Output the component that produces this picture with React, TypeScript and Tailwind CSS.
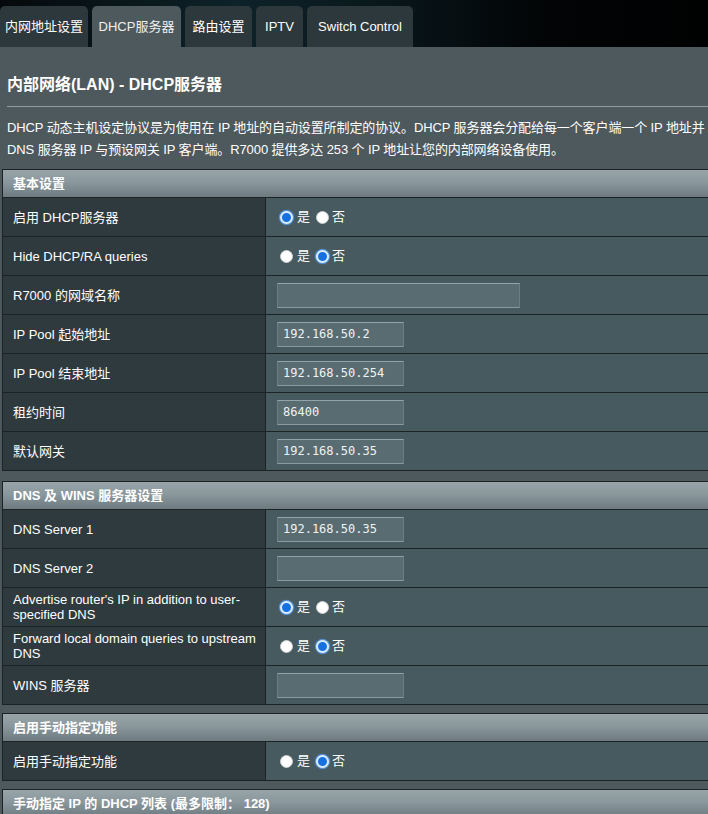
const tabs = [
  { label: "内网地址设置", w: "w-[88px]" },
  { label: "DHCP服务器", w: "w-[89px]", active: true },
  { label: "路由设置", w: "w-[67px]" },
  { label: "IPTV", w: "w-[47px]" },
  { label: "Switch Control", w: "w-[106px]" },
];

function Radio({ on }: { on: boolean }) {
  return on ? (
    <span className="inline-block h-[13px] w-[13px] rounded-full border-2 border-[#dcecff] bg-[#1670e0] shadow-[0_0_1px_1px_#5aa0f0]" />
  ) : (
    <span className="inline-block h-[13px] w-[13px] rounded-full border border-[#c9cdd0] bg-white" />
  );
}

function YesNo({ yes }: { yes: boolean }) {
  return (
    <div className="flex items-center text-[13px] text-white">
      <span className="ml-[3px] flex"><Radio on={yes} /></span>
      <span className="ml-[4px]">是</span>
      <span className="ml-[6px] flex"><Radio on={!yes} /></span>
      <span className="ml-[3px]">否</span>
    </div>
  );
}

function Field({ value = "", w = "w-[127px]" }: { value?: string; w?: string }) {
  return (
    <div
      className={`${w} flex h-[25px] items-center border border-[#6a7d83] border-t-[#93a4a9] border-b-[#8a9ba0] bg-[#596c71] pl-[5px] text-[12px] text-[#eef3f4]`}
      style={{ fontFamily: '"DejaVu Sans Mono", monospace' }}
    >
      {value}
    </div>
  );
}

type Row = { label: string; yes?: boolean; value?: string; w?: string };

function Section({ title, rows, className = "" }: { title: string; rows: Row[]; className?: string }) {
  return (
    <div className={`mx-[2px] border border-[#1c2325] ${className}`}>
      <div className="flex h-[28px] items-center border-b border-[#1c2325] bg-[linear-gradient(#97a4a8,#8a979c_45%,#6d7a7f)] pl-[10px] text-[13px] font-bold text-white">
        {title}
      </div>
      {rows.map((r, i) => (
        <div key={i} className="flex h-[39px] border-b border-[#1c2325] last:border-b-0 last:h-[38px]">
          <div className="flex w-[263px] shrink-0 items-center border-r border-[#1c2325] bg-[#2f3a3e] pl-[10px] pr-[4px] text-[13px] leading-[15px] text-white">
            {r.label}
          </div>
          <div className="flex flex-1 items-center bg-[#475a5f] pl-[11px]">
            {r.yes !== undefined ? <YesNo yes={r.yes} /> : <Field value={r.value} w={r.w} />}
          </div>
        </div>
      ))}
    </div>
  );
}

export default function App() {
  return (
    <div
      className="h-[814px] w-[708px] overflow-hidden bg-[#4d595d]"
      style={{ fontFamily: '"Liberation Sans", "Noto Sans CJK SC", sans-serif' }}
    >
      <div className="w-[780px]">
        <div className="flex h-[47px] items-end gap-[4px] bg-[linear-gradient(90deg,#05090b,#0d2329_30%,#0a1a1f_45%,#020405_70%,#000)]">
          {tabs.map((t) => (
            <div
              key={t.label}
              className={`${t.w} flex h-[41px] items-center justify-center rounded-t-[5px] text-[13px] ${
                t.active ? "bg-[#4d595d] text-[#f0f0f0]" : "bg-[#2d383c] text-white"
              }`}
            >
              {t.label}
            </div>
          ))}
        </div>

        <div className="px-[7px] pt-[27px] text-[16px] font-bold leading-[22px] text-white">
          内部网络(LAN) - DHCP服务器
        </div>
        <div className="ml-[7px] mt-[10px] h-px bg-[#8f9ca0]" />
        <div className="w-[708px] overflow-hidden whitespace-nowrap px-[7px] pt-[10px] text-[13px] leading-[22px] tracking-[-0.1px] text-white">
          <div>DHCP 动态主机设定协议是为使用在 IP 地址的自动设置所制定的协议。DHCP 服务器会分配给每一个客户端一个 IP 地址并</div>
          <div>DNS 服务器 IP 与预设网关 IP 客户端。R7000 提供多达 253 个 IP 地址让您的内部网络设备使用。</div>
        </div>

        <Section
          className="mt-[8px]"
          title="基本设置"
          rows={[
            { label: "启用 DHCP服务器", yes: true },
            { label: "Hide DHCP/RA queries", yes: false },
            { label: "R7000 的网域名称", value: "", w: "w-[243px]" },
            { label: "IP Pool 起始地址", value: "192.168.50.2" },
            { label: "IP Pool 结束地址", value: "192.168.50.254" },
            { label: "租约时间", value: "86400" },
            { label: "默认网关", value: "192.168.50.35" },
          ]}
        />
        <Section
          className="mt-[10px]"
          title="DNS 及 WINS 服务器设置"
          rows={[
            { label: "DNS Server 1", value: "192.168.50.35" },
            { label: "DNS Server 2", value: "" },
            { label: "Advertise router's IP in addition to user-specified DNS", yes: true },
            { label: "Forward local domain queries to upstream DNS", yes: false },
            { label: "WINS 服务器", value: "" },
          ]}
        />
        <Section className="mt-[8px]" title="启用手动指定功能" rows={[{ label: "启用手动指定功能", yes: false }]} />
        <Section className="mt-[8px]" title="手动指定 IP 的 DHCP 列表 (最多限制： 128)" rows={[]} />
      </div>
    </div>
  );
}
